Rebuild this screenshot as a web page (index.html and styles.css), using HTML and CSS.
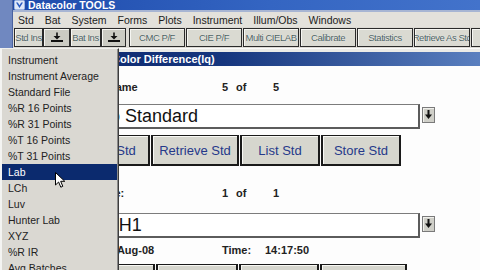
FILE: index.html
```html
<!DOCTYPE html>
<html>
<head>
<meta charset="utf-8">
<link rel="stylesheet" href="styles.css">
</head>
<body>
<div class="screen">
  <div class="desk"></div>
  <div class="win">
    <div class="titlebar">
      <svg class="appicon" width="11" height="10" viewBox="0 0 11 10"><rect x="0.5" y="0.5" width="10" height="9" rx="1" fill="#dfe8f8" stroke="#9fb6e0"/><path d="M2 2.5 L5.5 8 L9 2.5 L7.2 2.5 L5.5 5.2 L3.8 2.5 Z" fill="#2b5cc0"/></svg>
      <span class="title">Datacolor TOOLS</span>
    </div>
    <nav class="menubar">
      <span>Std</span><span>Bat</span><span>System</span><span>Forms</span><span>Plots</span><span>Instrument</span><span>Illum/Obs</span><span>Windows</span>
    </nav>
    <div class="toolbar">
      <button class="tb ins">Std Ins</button>
      <button class="tb dl"><svg width="14" height="11" viewBox="0 0 14 11"><path d="M7 0.5 V5" stroke="#111" stroke-width="1.6"/><path d="M3.5 4 H10.5 L7 7.5 Z" fill="#111"/><rect x="1" y="8" width="12" height="2" fill="#111"/></svg></button>
      <button class="tb ins bat">Bat Ins</button>
      <button class="tb dl narrow"><svg width="14" height="11" viewBox="0 0 14 11"><path d="M7 0.5 V5" stroke="#111" stroke-width="1.6"/><path d="M3.5 4 H10.5 L7 7.5 Z" fill="#111"/><rect x="1" y="8" width="12" height="2" fill="#111"/></svg></button>
      <button class="tb wide first">CMC P/F</button>
      <button class="tb wide">CIE P/F</button>
      <button class="tb wide">Multi CIELAB</button>
      <button class="tb wide">Calibrate</button>
      <button class="tb wide">Statistics</button>
      <button class="tb wide">Retrieve As Std</button>
      <button class="tb wide">Print</button>
    </div>
    <div class="sep"></div>
    <div class="child">
      <div class="ctitle">Color Difference(lq)</div>
      <div class="cbody">
        <div class="row">
          <span class="lbl">Standard Name</span><span class="n1">5</span><span class="of">of</span><span>5</span>
        </div>
        <div class="combo first-combo">
          <div class="field">Demo Standard</div>
          <div class="dd"><svg width="7" height="10" viewBox="0 0 7 10"><rect x="2.5" y="0" width="2" height="5" fill="#111"/><path d="M0 4.5 H7 L3.5 9 Z" fill="#111"/></svg></div>
        </div>
        <div class="btnrow first-row">
          <button class="pb b1">Delete Std</button>
          <button class="pb b2">Retrieve Std</button>
          <button class="pb b3">List Std</button>
          <button class="pb b4">Store Std</button>
        </div>
        <div class="row trial">
          <span class="lbl">Batch Name:</span><span class="n1">1</span><span class="of">of</span><span>1</span>
        </div>
        <div class="combo second-combo">
          <div class="field">BATCH1</div>
          <div class="dd"><svg width="7" height="10" viewBox="0 0 7 10"><rect x="2.5" y="0" width="2" height="5" fill="#111"/><path d="M0 4.5 H7 L3.5 9 Z" fill="#111"/></svg></div>
        </div>
        <div class="row daterow">
          <span class="dlbl">Date:</span><span class="dval">12-Aug-08</span><span class="tlbl">Time:</span><span>14:17:50</span>
        </div>
        <div class="btnrow second-row">
          <button class="pb c1">Delete Bat</button>
          <button class="pb c2">Retrieve Bat</button>
          <button class="pb c3">List Bat</button>
          <button class="pb c4">Store Bat</button>
        </div>
      </div>
    </div>
  </div>

  <ul class="menu">
    <li>Instrument</li>
    <li>Instrument Average</li>
    <li>Standard File</li>
    <li>%R 16 Points</li>
    <li>%R 31 Points</li>
    <li>%T 16 Points</li>
    <li>%T 31 Points</li>
    <li class="hl">Lab</li>
    <li>LCh</li>
    <li>Luv</li>
    <li>Hunter Lab</li>
    <li>XYZ</li>
    <li>%R IR</li>
    <li>Avg Batches</li>
  </ul>
  <svg class="cursor" width="11" height="17" viewBox="0 0 11 17"><path d="M0.5 0.5 L0.5 13 L3.6 10 L5.8 15.2 L7.8 14.3 L5.7 9.3 L9.8 9.3 Z" fill="#fff" stroke="#000" stroke-width="1" stroke-linejoin="round"/></svg>
</div>
</body>
</html>
```
FILE: styles.css
```css
html, body {
  margin: 0;
  padding: 0;
}
body {
  width: 480px;
  height: 270px;
  overflow: hidden;
  font-family: "Liberation Sans", Arial, sans-serif;
}
.screen {
  position: relative;
  display: flex;
  width: 480px;
  height: 270px;
  overflow: hidden;
  background: #fff;
}
.desk {
  width: 13px;
  flex: none;
  box-sizing: border-box;
  background: #7088c0;
  border-right: 1px solid #4a62a0;
}
.win {
  flex: 1;
  min-width: 0;
  height: 270px;
  display: flex;
  flex-direction: column;
  background: #dcdad4;
  overflow: hidden;
}
.titlebar {
  flex: none;
  height: 10px;
  display: flex;
  align-items: center;
  gap: 3px;
  padding-left: 1px;
  background: linear-gradient(90deg, #1d4aab, #3465c2 55%, #4373cb);
  border-bottom: 2px solid #a7b5d3;
  overflow: hidden;
}
.appicon { flex: none; }
.title {
  color: #fff;
  font-weight: bold;
  font-size: 10.5px;
  line-height: 10px;
  white-space: nowrap;
}
.menubar {
  flex: none;
  height: 15px;
  display: flex;
  align-items: center;
  gap: 11px;
  padding-left: 5px;
  font-size: 10.5px;
  color: #1c1c1c;
  background: #e3e1db;
  white-space: nowrap;
}
.toolbar {
  flex: none;
  height: 21px;
  box-sizing: border-box;
  display: flex;
  align-items: flex-start;
  padding: 1px 0 0 1px;
  background: #dcdad4;
  overflow: hidden;
}
.tb {
  flex: none;
  height: 19px;
  box-sizing: border-box;
  margin: 0;
  padding: 0;
  border: 1px solid #2a2a2a;
  background: #dadad2;
  box-shadow: inset 1px 1px 0 #f6f6f2;
  font-family: "Liberation Sans", Arial, sans-serif;
  font-size: 9.5px;
  letter-spacing: -0.45px;
  color: #4b5f5f;
  text-shadow: 0 0 1px #fff;
  display: flex;
  align-items: center;
  justify-content: center;
  white-space: nowrap;
  overflow: hidden;
}
.tb.ins { width: 29px; }
.tb.ins.bat { width: 31px; }
.tb.dl { width: 27px; background: #cbcbc3; }
.tb.dl.narrow { width: 25px; }
.tb.wide { width: 56px; margin-left: 1px; }
.tb.wide.first { margin-left: 3px; }
.sep {
  flex: none;
  height: 4px;
  box-sizing: border-box;
  background: #ebebe7;
  border-top: 1px solid #fafafa;
}
.child {
  flex: 1;
  min-height: 0;
  overflow: hidden;
  display: flex;
  flex-direction: column;
  background: #fdfdfd;
}
.ctitle {
  height: 14px;
  flex: none;
  padding-left: 99px;
  background: linear-gradient(90deg, #0a246a, #16367e 45%, #5a7fbf);
  color: #fff;
  font-weight: bold;
  font-size: 11px;
  line-height: 14px;
  white-space: nowrap;
}
.cbody {
  flex: none;
  padding: 14px 0 0 44px;
  font-size: 11px;
}
.row {
  display: flex;
  height: 14px;
  line-height: 14px;
  font-weight: bold;
  color: #222;
  white-space: nowrap;
}
.lbl { width: 165px; }
.n1 { width: 14px; }
.of { width: 37px; }
.dlbl { width: 44px; }
.dval { width: 121px; }
.tlbl { width: 43px; }
.combo {
  display: flex;
  margin-left: 11px;
  height: 25px;
}
.first-combo { margin-top: 10px; }
.second-combo { margin-top: 13px; }
.field {
  width: 352px;
  height: 25px;
  box-sizing: border-box;
  border: 1px solid #7c7c7c;
  border-right: 2px solid #5c5c5c;
  border-bottom: 2px solid #5c5c5c;
  background: #fff;
  padding-left: 3px;
  font-size: 18px;
  line-height: 22px;
  color: #111;
  white-space: nowrap;
  overflow: hidden;
}
.dd {
  width: 13px;
  height: 16px;
  margin: 3px 0 0 2px;
  box-sizing: border-box;
  border: 1px solid #7a7a7a;
  background: #cfcfc8;
  box-shadow: inset 1px 1px 0 #f0f0ec;
  display: flex;
  align-items: center;
  justify-content: center;
}
.btnrow {
  display: flex;
  gap: 1px;
  height: 31px;
}
.first-row { margin-top: 6px; }
.trial { margin-top: 20px; }
.daterow { margin-top: 5px; }
.second-row { margin-top: 7px; }
.pb {
  flex: none;
  height: 31px;
  box-sizing: border-box;
  margin: 0;
  padding: 0;
  border-style: solid;
  border-color: #1a1a1a;
  border-width: 1px 2px 2px 2px;
  background: #d6d6ce;
  box-shadow: inset 1px 1px 0 #f8f8f4;
  font-family: "Liberation Sans", Arial, sans-serif;
  font-size: 13px;
  color: #25398a;
  white-space: nowrap;
}
.b1 { width: 93px; padding-left: 4px; }
.b2 { width: 88px; }
.b3 { width: 80px; }
.b4 { width: 80px; }
.c1 { width: 98px; }
.c2 { width: 82px; }
.c3 { width: 80px; }
.c4 { width: 87px; }
.menu {
  position: absolute;
  left: 0;
  top: 48px;
  width: 119px;
  height: 230px;
  box-sizing: border-box;
  margin: 0;
  padding: 3px 0 0 0;
  list-style: none;
  background: #dad8d2;
  border-left: 2px solid #f4f4f2;
  border-top: 1px solid #f0f0ee;
  border-right: 1px solid #3c3c3c;
  box-shadow: inset -1px 0 0 #8a8a8a;
  font-size: 10.5px;
  color: #222;
}
.menu li {
  height: 16px;
  line-height: 16px;
  padding-left: 6px;
  white-space: nowrap;
}
.menu li.hl {
  background: #0b2a6e;
  color: #fff;
  margin-right: 1px;
}
.cursor {
  position: absolute;
  left: 55px;
  top: 172px;
}
```
